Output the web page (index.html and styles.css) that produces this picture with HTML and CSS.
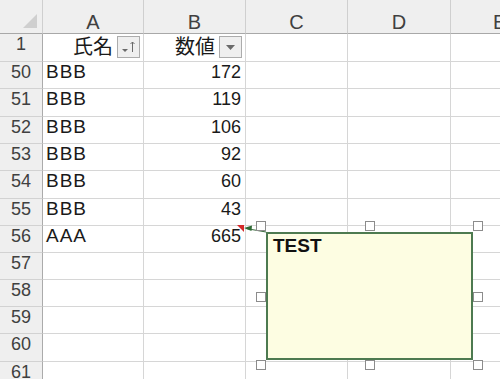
FILE: index.html
```html
<!DOCTYPE html>
<html lang="ja">
<head>
<meta charset="utf-8">
<link rel="stylesheet" href="styles.css">
</head>
<body>
<div class="sheet">
  <div class="grid">
    <div class="corner"><svg class="corner-tri" width="16" height="15" viewBox="0 0 16 15"><polygon points="15,0 15,14 1,14" fill="#cfcfcf"/></svg></div>
    <div class="colhead">A</div>
    <div class="colhead">B</div>
    <div class="colhead">C</div>
    <div class="colhead">D</div>
    <div class="colhead colhead-last">E</div>

    <div class="rowhead">1</div>
    <div class="cell hdr"><span class="jp">氏名</span><span class="fbtn"><svg width="21" height="20" viewBox="0 0 21 20"><polygon points="4,12 10,12 7,15" fill="#6a6a6a"/><line x1="14.5" y1="5" x2="14.5" y2="15" stroke="#6a6a6a" stroke-width="1"/><polyline points="12.5,7 14.5,5 16.5,7" fill="none" stroke="#6a6a6a" stroke-width="1"/></svg></span></div>
    <div class="cell hdr"><span class="jp">数値</span><span class="fbtn"><svg width="21" height="20" viewBox="0 0 21 20"><polygon points="6,8 15,8 10.5,13" fill="#6a6a6a"/></svg></span></div>
    <div class="cell"></div><div class="cell"></div><div class="cell"></div>

    <div class="rowhead">50</div><div class="cell txt">BBB</div><div class="cell num">172</div><div class="cell"></div><div class="cell"></div><div class="cell"></div>
    <div class="rowhead">51</div><div class="cell txt">BBB</div><div class="cell num">119</div><div class="cell"></div><div class="cell"></div><div class="cell"></div>
    <div class="rowhead">52</div><div class="cell txt">BBB</div><div class="cell num">106</div><div class="cell"></div><div class="cell"></div><div class="cell"></div>
    <div class="rowhead">53</div><div class="cell txt">BBB</div><div class="cell num">92</div><div class="cell"></div><div class="cell"></div><div class="cell"></div>
    <div class="rowhead">54</div><div class="cell txt">BBB</div><div class="cell num">60</div><div class="cell"></div><div class="cell"></div><div class="cell"></div>
    <div class="rowhead">55</div><div class="cell txt">BBB</div><div class="cell num">43</div><div class="cell"></div><div class="cell"></div><div class="cell"></div>
    <div class="rowhead">56</div><div class="cell txt">AAA</div><div class="cell num">665</div><div class="cell"></div><div class="cell"></div><div class="cell"></div>
    <div class="rowhead">57</div><div class="cell"></div><div class="cell"></div><div class="cell"></div><div class="cell"></div><div class="cell"></div>
    <div class="rowhead">58</div><div class="cell"></div><div class="cell"></div><div class="cell"></div><div class="cell"></div><div class="cell"></div>
    <div class="rowhead">59</div><div class="cell"></div><div class="cell"></div><div class="cell"></div><div class="cell"></div><div class="cell"></div>
    <div class="rowhead">60</div><div class="cell"></div><div class="cell"></div><div class="cell"></div><div class="cell"></div><div class="cell"></div>
    <div class="rowhead">61</div><div class="cell"></div><div class="cell"></div><div class="cell"></div><div class="cell"></div><div class="cell"></div>
  </div>

  <svg class="connector" width="500" height="379" viewBox="0 0 500 379">
    <polygon points="237,225 244,225 244,232" fill="#d42a2a"/>
    <line x1="246" y1="228.5" x2="266" y2="232" stroke="#3f6f42" stroke-width="1.2"/>
    <polygon points="244,228 252,225.5 251.5,231" fill="#2f6b34"/>
  </svg>

  <div class="comment"><span class="comment-text">TEST</span></div>

  <div class="handle h-tl"></div>
  <div class="handle h-tm"></div>
  <div class="handle h-tr"></div>
  <div class="handle h-ml"></div>
  <div class="handle h-mr"></div>
  <div class="handle h-bl"></div>
  <div class="handle h-bm"></div>
  <div class="handle h-br"></div>
</div>
</body>
</html>
```

FILE: styles.css
```css
* { box-sizing: border-box; }
html, body { margin: 0; padding: 0; background: #ffffff; }
body { width: 500px; height: 379px; overflow: hidden; font-family: "Liberation Sans", Arial, sans-serif; }

.sheet { position: relative; width: 500px; height: 379px; overflow: hidden; }

.grid {
  display: grid;
  grid-template-columns: 43px 101px 102px 102px 103px 60px;
  grid-template-rows: 34px 28px 27px 28px 27px 27px 28px 27px 27px 27px 27px 27px 28px 28px;
}

.corner {
  background: #efefef;
  border-right: 1px solid #cfcfcf;
  border-bottom: 1px solid #a8a8a8;
  display: flex;
  justify-content: flex-end;
  align-items: flex-end;
  padding: 0 4px 4px 0;
}
.corner-tri { display: block; }

.colhead {
  background: #efefef;
  border-right: 1px solid #cfcfcf;
  border-bottom: 1px solid #a8a8a8;
  color: #404040;
  font-size: 20px;
  line-height: 18px;
  padding-top: 13px;
  text-align: center;
}
.colhead-last { text-align: left; padding-left: 42px; }

.rowhead {
  background: #efefef;
  border-right: 1px solid #ababab;
  border-bottom: 1px solid #d2d2d2;
  color: #404040;
  font-size: 18px;
  line-height: 18px;
  padding-top: 1px;
  text-align: center;
}

.cell {
  border-right: 1px solid #d6d6d6;
  border-bottom: 1px solid #d6d6d6;
  color: #1a1a1a;
  font-size: 18px;
  line-height: 18px;
  padding-top: 1px;
}
.txt { padding-left: 3px; letter-spacing: 1px; font-size: 19px; }
.num { text-align: right; padding-right: 4px; }

.hdr {
  display: flex;
  justify-content: flex-end;
  align-items: flex-start;
  gap: 4px;
  padding: 0 3px 0 0;
}
.jp {
  font-family: "Noto Sans CJK JP", "Liberation Sans", sans-serif;
  font-size: 20px;
  line-height: 21px;
  color: #1a1a1a;
  margin-top: 1px;
}
.fbtn {
  width: 23px;
  height: 22px;
  margin-top: 2px;
  background: #efefef;
  border: 1px solid #acacac;
  display: flex;
  align-items: center;
  justify-content: center;
}
.fbtn svg { display: block; }

.connector { position: absolute; left: 0; top: 0; pointer-events: none; }

.comment {
  position: absolute;
  left: 266px;
  top: 232px;
  width: 207px;
  height: 128px;
  background: #fdfde2;
  border: 2px solid #4d7a50;
  padding: 2px 0 0 5px;
}
.comment-text {
  font-family: "Liberation Sans", Arial, sans-serif;
  font-weight: bold;
  font-size: 19px;
  line-height: 20px;
  color: #111111;
}

.handle {
  position: absolute;
  width: 10px;
  height: 10px;
  background: #ffffff;
  border: 1.5px solid #8c8c8c;
}
.h-tl { left: 256px; top: 221px; }
.h-tm { left: 365px; top: 221px; }
.h-tr { left: 473px; top: 221px; }
.h-ml { left: 256px; top: 292px; }
.h-mr { left: 473px; top: 292px; }
.h-bl { left: 256px; top: 360px; }
.h-bm { left: 365px; top: 360px; }
.h-br { left: 473px; top: 360px; }
```
